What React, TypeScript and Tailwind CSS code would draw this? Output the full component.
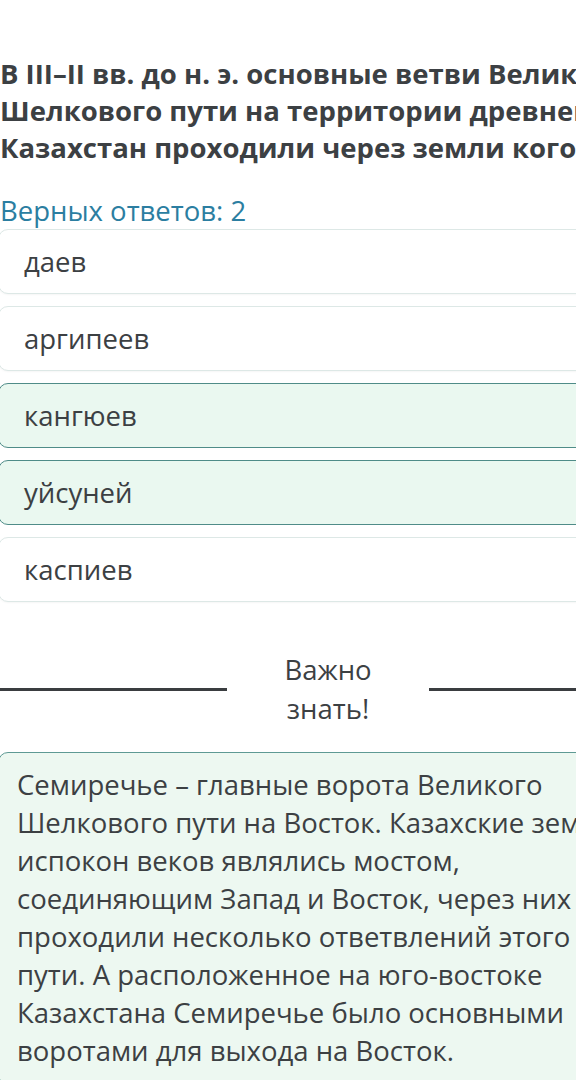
const answers = [
  { text: "даев", selected: false },
  { text: "аргипеев", selected: false },
  { text: "кангюев", selected: true },
  { text: "уйсуней", selected: true },
  { text: "каспиев", selected: false },
];

export default function App() {
  return (
    <div
      className="w-[576px] h-[1080px] overflow-hidden bg-white text-[#3c4043]"
      style={{ fontFamily: '"Open Sans", "Noto Sans", sans-serif' }}
    >
      <div className="-ml-[2px] w-[660px]">
        {/* Question */}
        <h1 className="pt-[55px] pl-[2px] text-[27.5px] leading-[37px] font-bold">
          В III–II вв. до н. э. основные ветви Великого Шелкового пути на
          территории древнего Казахстан проходили через земли кого?
        </h1>

        <p className="mt-[26px] pl-[2px] text-[27.5px] leading-[37px] text-[#2b7ea1]">
          Верных ответов: 2
        </p>

        {/* Answers */}
        <div className="flex flex-col gap-[12px]">
          {answers.map((a) => (
            <div
              key={a.text}
              className={
                a.selected
                  ? "h-[65px] flex items-center pl-[25px] rounded-[10px] border border-[#4f8c88] bg-[#eaf8f0] text-[27.5px]"
                  : "h-[65px] flex items-center pl-[25px] rounded-[10px] border border-[#dde8e6] bg-white shadow-[0_1px_2px_rgba(0,0,0,0.04)] text-[27.5px]"
              }
            >
              {a.text}
            </div>
          ))}
        </div>

        {/* Divider */}
        <div className="mt-[48px] flex items-center">
          <div className="flex-1 h-[3px] bg-[#3a3d40]" />
          <div className="w-[202px] px-[28px] text-center text-[27.5px] leading-[39px]">
            Важно знать!
          </div>
          <div className="flex-1 h-[3px] bg-[#3a3d40]" />
        </div>

        {/* Info */}
        <div className="mt-[24px] rounded-[10px] border border-[#5e9a94] bg-[#edf8f1] pt-[13px] pb-[14px] pl-[18px] pr-[35px] text-[27.5px] leading-[38px]">
          Семиречье – главные ворота Великого Шелкового пути на Восток.
          Казахские земли испокон веков являлись мостом, соединяющим Запад и
          Восток, через них проходили несколько ответвлений этого пути. А
          расположенное на юго-востоке Казахстана Семиречье было основными
          воротами для выхода на Восток.
        </div>
      </div>
    </div>
  );
}
